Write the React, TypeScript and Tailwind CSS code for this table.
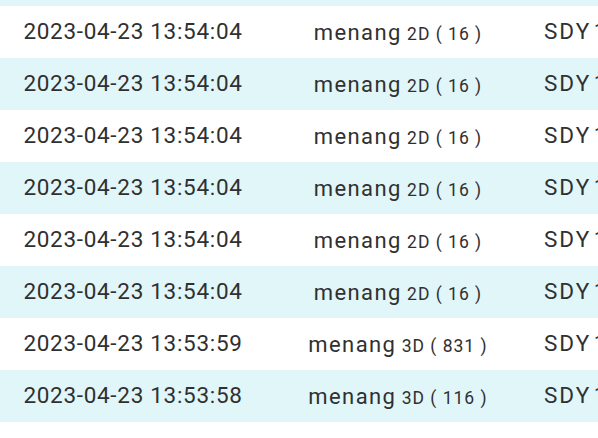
const rows = [
  { time: '2023-04-23 13:54:04', type: '2D', num: '16' },
  { time: '2023-04-23 13:54:04', type: '2D', num: '16' },
  { time: '2023-04-23 13:54:04', type: '2D', num: '16' },
  { time: '2023-04-23 13:54:04', type: '2D', num: '16' },
  { time: '2023-04-23 13:54:04', type: '2D', num: '16' },
  { time: '2023-04-23 13:54:04', type: '2D', num: '16' },
  { time: '2023-04-23 13:53:59', type: '3D', num: '831' },
  { time: '2023-04-23 13:53:58', type: '3D', num: '116' },
]

export default function App() {
  return (
    <div className="w-[598px] h-[438px] overflow-hidden bg-white text-[#303030] font-['Roboto',sans-serif]">
      <div className="h-[6px] bg-[#e1f6f9]" />
      {rows.map((r, i) => (
        <div
          key={i}
          className={`flex items-center h-[52px] whitespace-nowrap ${i % 2 === 1 ? 'bg-[#e1f6f9]' : 'bg-white'}`}
        >
          <div className="w-[266px] shrink-0 text-center text-[22.5px] tracking-[0.7px]">{r.time}</div>
          <div className="w-[264px] shrink-0 text-center">
            <span className="text-[22px] tracking-[1.4px]">menang</span>
            <span className="text-[17.5px] tracking-[1px]"> {r.type} ( {r.num} )</span>
          </div>
          <div className="shrink-0 pl-[14px] text-[22.5px] tracking-[2px] [word-spacing:-5px]">SDY 1234</div>
        </div>
      ))}
    </div>
  )
}
